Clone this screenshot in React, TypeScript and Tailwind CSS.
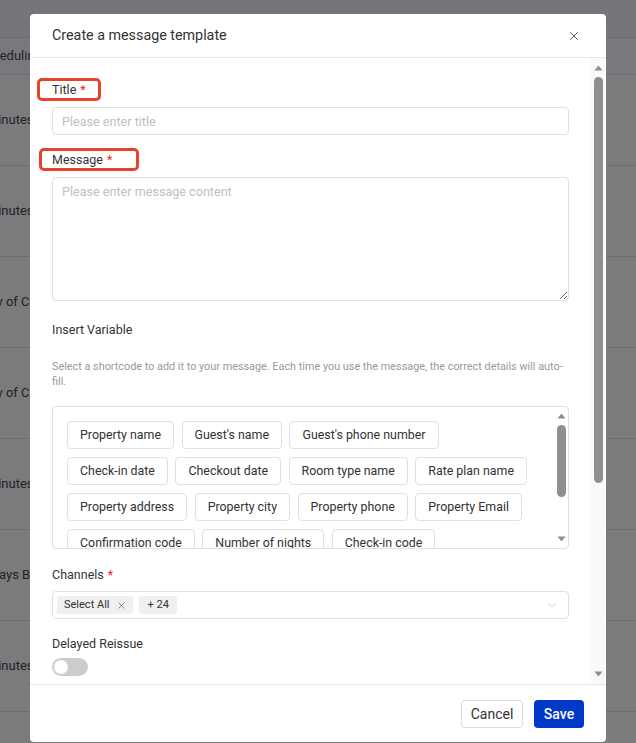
import { X, ChevronDown } from "lucide-react"

const bgRows = [
  { text: "30 Minutes After", off: "-ml-[31px]" },
  { text: "30 Minutes After", off: "-ml-[31px]" },
  { text: "Day of Check-in", off: "-ml-[19px]" },
  { text: "Day of Check-in", off: "-ml-[19px]" },
  { text: "30 Minutes After", off: "-ml-[31px]" },
  { text: "3 Days Before", off: "-ml-[20px]" },
  { text: "30 Minutes After", off: "-ml-[31px]" },
  { text: "", off: "" },
]

const chipRows = [
  ["Property name", "Guest's name", "Guest's phone number"],
  ["Check-in date", "Checkout date", "Room type name", "Rate plan name"],
  ["Property address", "Property city", "Property phone", "Property Email"],
  ["Confirmation code", "Number of nights", "Check-in code"],
]

const Arrow = ({ down }: { down?: boolean }) => (
  <svg width="9" height="6" viewBox="0 0 9 6" className={down ? "rotate-180" : ""}>
    <path d="M4.5 0.5 L8.5 5.5 L0.5 5.5 Z" fill="#8f8f8f" />
  </svg>
)

const Label = ({ text, required }: { text: string; required?: boolean }) => (
  <div className="text-[12.5px] leading-[20px] text-[#333]">
    {text}
    {required && <span className="ml-1 text-[#f5222d]">*</span>}
  </div>
)

const Background = () => (
  <div className="flex flex-col">
    <div className="h-[38px] border-b border-[#6c6c6f] bg-[#75767a]" />
    <div className="flex h-[37px] items-center border-b border-[#6c6c6f] bg-[#78797c]">
      <span className="-ml-[22px] whitespace-nowrap text-[13px] text-[#222]">Scheduling</span>
    </div>
    {bgRows.map((r, i) => (
      <div key={i} className="flex h-[91px] items-center border-b border-[#6c6c6f]">
        <span className={`${r.off} whitespace-nowrap text-[13px] text-[#222]`}>{r.text}</span>
      </div>
    ))}
  </div>
)

export default function App() {
  return (
    <div className="relative h-[743px] w-[636px] overflow-hidden bg-[#7b7b7d] font-['Roboto',sans-serif]">
      <Background />

      <div className="absolute left-[30px] top-[14px] flex h-[728px] w-[576px] flex-col overflow-hidden rounded-[4px] bg-white">
        {/* header */}
        <div className="flex h-[44px] shrink-0 items-center justify-between border-b border-[#e5e5e5] pl-[22px] pr-[25px]">
          <span className="text-[14.3px] text-[#333]">Create a message template</span>
          <X size={14} strokeWidth={1.5} color="#444" />
        </div>

        {/* body */}
        <div className="flex h-[626px] shrink-0">
          <div className="flex flex-1 flex-col overflow-hidden px-[22px] pt-[22px]">
            <div className="relative mb-[7px] w-fit">
              <Label text="Title" required />
              <div className="absolute -left-[15px] -top-[2px] h-[23px] w-[64px] rounded-[5px] border-[3px] border-[#e8412c]" />
            </div>
            <input
              className="h-[28px] shrink-0 rounded-[4px] border border-[#e0e0e0] px-[9px] text-[12.6px] outline-none placeholder:text-[#c0c0c0]"
              placeholder="Please enter title"
            />

            <div className="relative mb-[7px] mt-[15px] w-fit">
              <Label text="Message" required />
              <div className="absolute -left-[13px] -top-[2px] h-[23px] w-[100px] rounded-[5px] border-[3px] border-[#e8412c]" />
            </div>
            <textarea
              className="h-[124px] shrink-0 rounded-[4px] border border-[#e0e0e0] px-[9px] py-[5px] text-[12.6px] outline-none placeholder:text-[#c0c0c0]"
              placeholder="Please enter message content"
            />

            <div className="mt-[19px]">
              <Label text="Insert Variable" />
            </div>
            <p className="mt-[19px] text-[10.85px] leading-[15px] text-[#999]">
              Select a shortcode to add it to your message. Each time you use the message, the correct details will auto-fill.
            </p>

            <div className="mt-[17px] flex h-[143px] shrink-0 rounded-[4px] border border-[#e0e0e0]">
              <div className="flex flex-1 flex-col gap-2 overflow-hidden pl-[14px] pt-[14px]">
                {chipRows.map((row, i) => (
                  <div key={i} className="flex shrink-0 gap-[7.5px]">
                    {row.map((c) => (
                      <div
                        key={c}
                        className="flex h-[28px] items-center whitespace-nowrap rounded-[4px] border border-[#e0e0e0] px-3 text-[12.4px] text-[#333]"
                      >
                        {c}
                      </div>
                    ))}
                  </div>
                ))}
              </div>
              <div className="flex w-[14px] flex-col items-center justify-between py-[6px]">
                <Arrow />
                <div className="mb-auto mt-[6px] h-[72px] w-[9px] rounded-full bg-[#8f8f8f]" />
                <Arrow down />
              </div>
            </div>

            <div className="mb-[6px] mt-[16px]">
              <Label text="Channels" required />
            </div>
            <div className="flex h-[28px] shrink-0 items-center gap-[6px] rounded-[4px] border border-[#e0e0e0] pl-[4px] pr-[9px]">
              <div className="flex h-[18px] items-center gap-[7px] rounded-[2px] bg-[#f0f0f0] pl-[7px] pr-[6px] text-[11px] text-[#333]">
                Select All
                <X size={11} strokeWidth={1.4} color="#555" />
              </div>
              <div className="flex h-[18px] items-center rounded-[2px] bg-[#f0f0f0] px-[8px] text-[11px] text-[#333]">
                + 24
              </div>
              <ChevronDown size={14} strokeWidth={1.2} color="#c0c0c0" className="ml-auto" />
            </div>

            <div className="mb-[4px] mt-[15px]">
              <Label text="Delayed Reissue" />
            </div>
            <div className="flex h-[18px] w-[36px] shrink-0 items-center rounded-full bg-[#cccccc] pl-[2px]">
              <div className="h-[14px] w-[14px] rounded-full bg-white" />
            </div>
          </div>

          {/* body scrollbar */}
          <div className="mr-[1px] flex w-[14px] flex-col items-center bg-[#f9f9f9] py-[7px]">
            <Arrow />
            <div className="mt-[6px] h-[406px] w-[9px] rounded-full bg-[#8f8f8f]" />
            <div className="mt-auto">
              <Arrow down />
            </div>
          </div>
        </div>

        {/* footer */}
        <div className="flex flex-1 justify-end gap-[11px] border-t border-[#e5e5e5] pr-[22px] pt-[15px]">
          <button className="h-[28px] w-[62px] rounded-[4px] border border-[#d9d9d9] bg-white text-[14px] text-[#333]">
            Cancel
          </button>
          <button className="h-[28px] w-[50px] rounded-[4px] bg-[#0039c8] text-[14px] font-medium text-white">
            Save
          </button>
        </div>
      </div>
    </div>
  )
}
